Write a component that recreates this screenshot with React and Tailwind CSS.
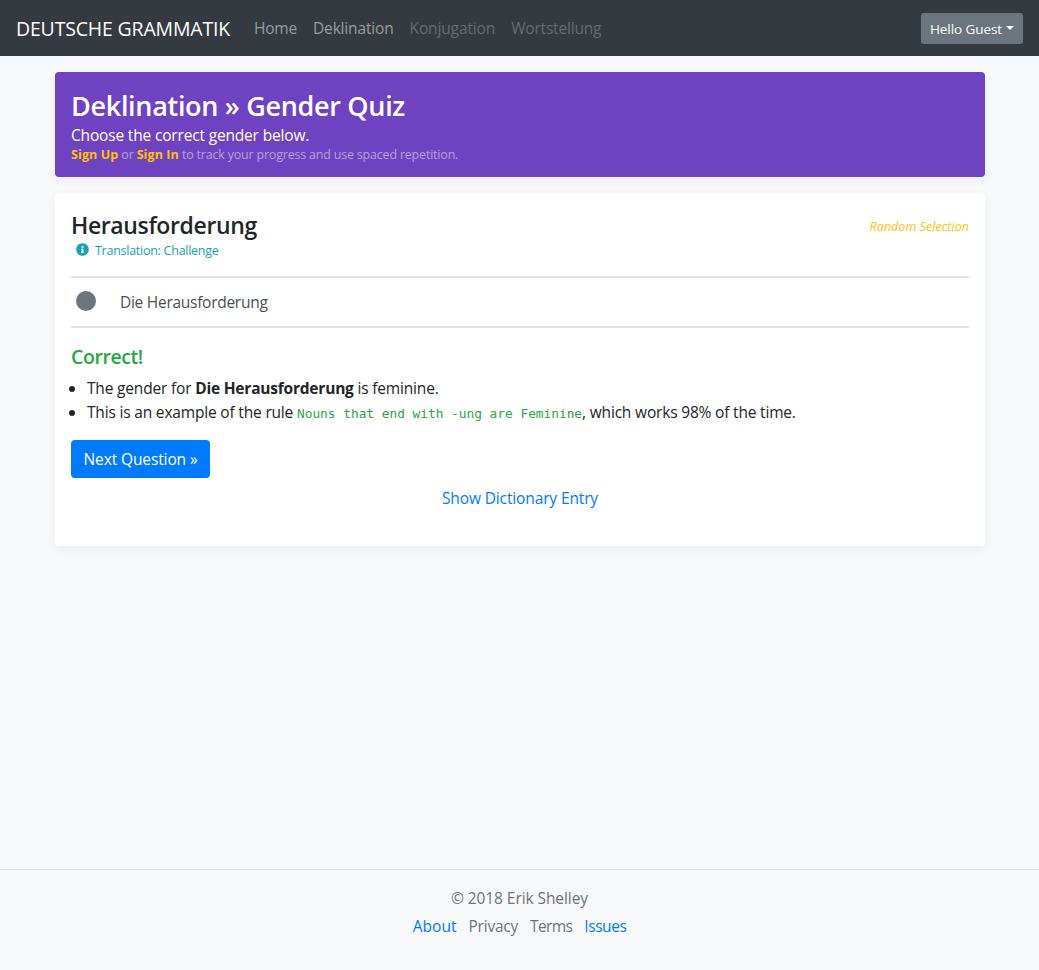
function NavLink({ className, children }) {
  return (
    <a className={`px-2 py-2 ${className}`} href="#">
      {children}
    </a>
  );
}

function Navbar() {
  return (
    <nav className="flex h-14 items-center bg-[#343a40] px-4 leading-6 whitespace-nowrap">
      <a className="mr-4 w-[214px] pt-0.5 text-[19.5px] leading-[30px] tracking-[-0.18px] text-white" href="#">
        DEUTSCHE GRAMMATIK
      </a>
      <div className="flex flex-1 items-center">
        <NavLink className="tracking-[-0.2px] text-[#999c9f]">Home</NavLink>
        <NavLink className="tracking-[-0.164px] text-[#999c9f]">Deklination</NavLink>
        <NavLink className="tracking-[-0.13px] text-[#676b70]">Konjugation</NavLink>
        <NavLink className="tracking-[-0.18px] text-[#676b70]">Wortstellung</NavLink>
      </div>
      <button className="flex h-[31px] w-[102px] items-center rounded-[3px] bg-[#6c757d] pl-[9px] text-[13.5px] tracking-[-0.082px] text-white">
        <span className="pt-0.5">Hello Guest</span>
        <span className="ml-[4px] border-x-4 border-t-4 border-x-transparent border-t-white" />
      </button>
    </nav>
  );
}

function Banner() {
  return (
    <section className="h-[105px] rounded bg-[#6f42c1] p-4 text-white shadow-[0_4px_12px_rgba(0,0,0,0.05)]">
      <h1 className="h-[34px] text-[27px] leading-9 font-semibold tracking-[-0.31px]">Deklination » Gender Quiz</h1>
      <p className="h-6 leading-[26px] tracking-[-0.17px]">Choose the correct gender below.</p>
      <p className="text-[12.5px] leading-[18px] tracking-[-0.2px] text-[#b7a0e0]">
        <a className="font-bold tracking-[0.1px] text-[#ffc107]" href="#">Sign Up</a>
        {" or "}
        <a className="font-bold tracking-[0.1px] text-[#ffc107]" href="#">Sign In</a>
        {" to track your progress and use spaced repetition."}
      </p>
    </section>
  );
}

function InfoIcon() {
  return (
    <svg className="mb-1 size-[13px]" viewBox="0 0 512 512" fill="currentColor">
      <path d="M256 8C119 8 8 119 8 256s111 248 248 248 248-111 248-248S393 8 256 8zm0 110c23 0 42 19 42 42s-19 42-42 42-42-19-42-42 19-42 42-42zm56 254c0 7-5 12-12 12h-88c-7 0-12-5-12-12v-24c0-7 5-12 12-12h12v-64h-12c-7 0-12-5-12-12v-24c0-7 5-12 12-12h64c7 0 12 5 12 12v100h12c7 0 12 5 12 12v24z" />
    </svg>
  );
}

function QuizCard() {
  return (
    <section className="mt-4 h-[353px] rounded bg-white p-4 shadow-[0_4px_12px_rgba(0,0,0,0.05)]">
      <div className="flex h-[67px] justify-between">
        <div>
          <h2 className="text-[23px] leading-8 font-semibold tracking-[-0.37px]">Herausforderung</h2>
          <div className="flex items-center gap-1.5 pl-[5px] text-[12.5px] leading-5 tracking-[-0.26px] text-[#17a2b8]">
            <InfoIcon />
            <span>Translation: Challenge</span>
          </div>
        </div>
        <em className="pt-2 text-[12.5px] leading-5 tracking-[0.03px] text-[#ffc107]">Random Selection</em>
      </div>
      <div className="flex h-[52px] items-center border-y-2 border-[#dee2e6] pl-[5px] text-[#495057]">
        <span className="mb-0.5 size-5 rounded-full bg-[#6c757d]" />
        <span className="ml-6 pt-0.5 tracking-[-0.27px]">Die Herausforderung</span>
      </div>
      <h3 className="mt-[17px] text-[19.5px] leading-6 font-semibold tracking-[-0.42px] text-[#28a745]">Correct!</h3>
      <ul className="mt-[7px] list-disc pl-4 leading-6">
        <li className="h-6 tracking-[-0.18px]">
          The gender for <strong className="font-bold tracking-[-0.209px]">Die Herausforderung</strong> is feminine.
        </li>
        <li className="h-6 tracking-[-0.18px]">
          This is an example of the rule{" "}
          <code className="font-['DejaVu_Sans_Mono',monospace] text-[12.8px] tracking-normal text-[#28a745]">
            Nouns that end with -ung are Feminine
          </code>
          , which works 98% of the time.
        </li>
      </ul>
      <button className="mt-4 flex h-[38px] w-[139px] items-center justify-center rounded bg-[#007bff] pt-0.5 tracking-[-0.111px] text-white">
        Next Question »
      </button>
      <a className="mt-2 block text-center leading-6 tracking-[-0.129px] text-[#007bff]" href="#">
        Show Dictionary Entry
      </a>
    </section>
  );
}

function Footer() {
  return (
    <footer className="h-[101px] border-t border-[#dee2e6] pt-4 text-center leading-6 text-[#6c757d]">
      <p className="tracking-[-0.075px]">© 2018 Erik Shelley</p>
      <div className="mt-1 flex justify-center gap-3">
        <a className="tracking-[0.05px] text-[#007bff]" href="#">About</a>
        <span className="tracking-[-0.231px]">Privacy</span>
        <span className="tracking-[-0.6px]">Terms</span>
        <a className="tracking-[-0.45px] text-[#007bff]" href="#">Issues</a>
      </div>
    </footer>
  );
}

export default function App() {
  return (
    <div className="flex h-[970px] flex-col overflow-hidden bg-[#f8f9fb] font-['Open_Sans',sans-serif] text-[15.5px] text-[#212529]">
      <Navbar />
      <main className="ml-[55px] w-[930px] flex-1 pt-4">
        <Banner />
        <QuizCard />
      </main>
      <Footer />
    </div>
  );
}
